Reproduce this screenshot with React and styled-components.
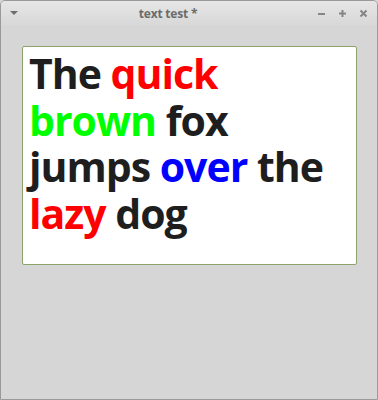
import React from 'react'
import styled, { createGlobalStyle } from 'styled-components'

const GlobalStyle = createGlobalStyle`
  html, body {
    margin: 0;
    padding: 0;
    background: #d6d6d6;
  }
  * {
    box-sizing: border-box;
  }
`

const Window = styled.div`
  width: 378px;
  height: 400px;
  display: flex;
  flex-direction: column;
  border: 1px solid #9a9a9a;
  border-radius: 5px 5px 0 0;
  background: #d6d6d6;
  overflow: hidden;
`

const TitleBar = styled.div`
  height: 24px;
  display: grid;
  grid-template-columns: 30px 1fr 72px;
  align-items: center;
  background: linear-gradient(#e6e6e6, #d8d8d8);
  color: #6b6b6b;
  font-family: "Open Sans", "Liberation Sans", sans-serif;
`

const MenuArrow = styled.span`
  justify-self: start;
  margin-left: 9px;
  width: 0;
  height: 0;
  border-left: 4px solid transparent;
  border-right: 4px solid transparent;
  border-top: 4px solid #6e6e6e;
`

const Title = styled.div`
  text-align: center;
  font-size: 12px;
  font-weight: 700;
  letter-spacing: -0.2px;
`

const Controls = styled.div`
  display: flex;
  justify-content: flex-end;
  align-items: center;
  gap: 12px;
  padding-right: 9px;
`

const ControlIcon = styled.svg`
  width: 9px;
  height: 9px;
  stroke: #858585;
  stroke-width: 2;
  fill: none;
`

const Content = styled.div`
  flex: 1;
  padding: 21px 20px 0 21px;
`

const TextBox = styled.div`
  height: 219px;
  background: #ffffff;
  border: 1px solid #8ca46c;
  border-radius: 2px;
  padding: 3px 6px;
  font-family: "Open Sans", "Noto Sans", sans-serif;
  font-weight: 700;
  font-size: 41px;
  line-height: 46.7px;
  letter-spacing: -1px;
  color: #1e1e1e;
`

const Word = styled.span`
  color: ${(p) => p.$color || '#1e1e1e'};
`

export default function App() {
  return (
    <>
      <GlobalStyle />
      <Window>
        <TitleBar>
          <MenuArrow />
          <Title>text test *</Title>
          <Controls>
            <ControlIcon viewBox="0 0 9 9">
              <path d="M1 5h7" />
            </ControlIcon>
            <ControlIcon viewBox="0 0 9 9">
              <path d="M1 4.5h7M4.5 1v7" />
            </ControlIcon>
            <ControlIcon viewBox="0 0 9 9">
              <path d="M1.5 1.5l6 6M7.5 1.5l-6 6" />
            </ControlIcon>
          </Controls>
        </TitleBar>
        <Content>
          <TextBox>
            The <Word $color="#ff0000">quick</Word> <Word $color="#00ff00">brown</Word> fox
            jumps <Word $color="#0000ff">over</Word> the <Word $color="#ff0000">lazy</Word> dog
          </TextBox>
        </Content>
      </Window>
    </>
  )
}
